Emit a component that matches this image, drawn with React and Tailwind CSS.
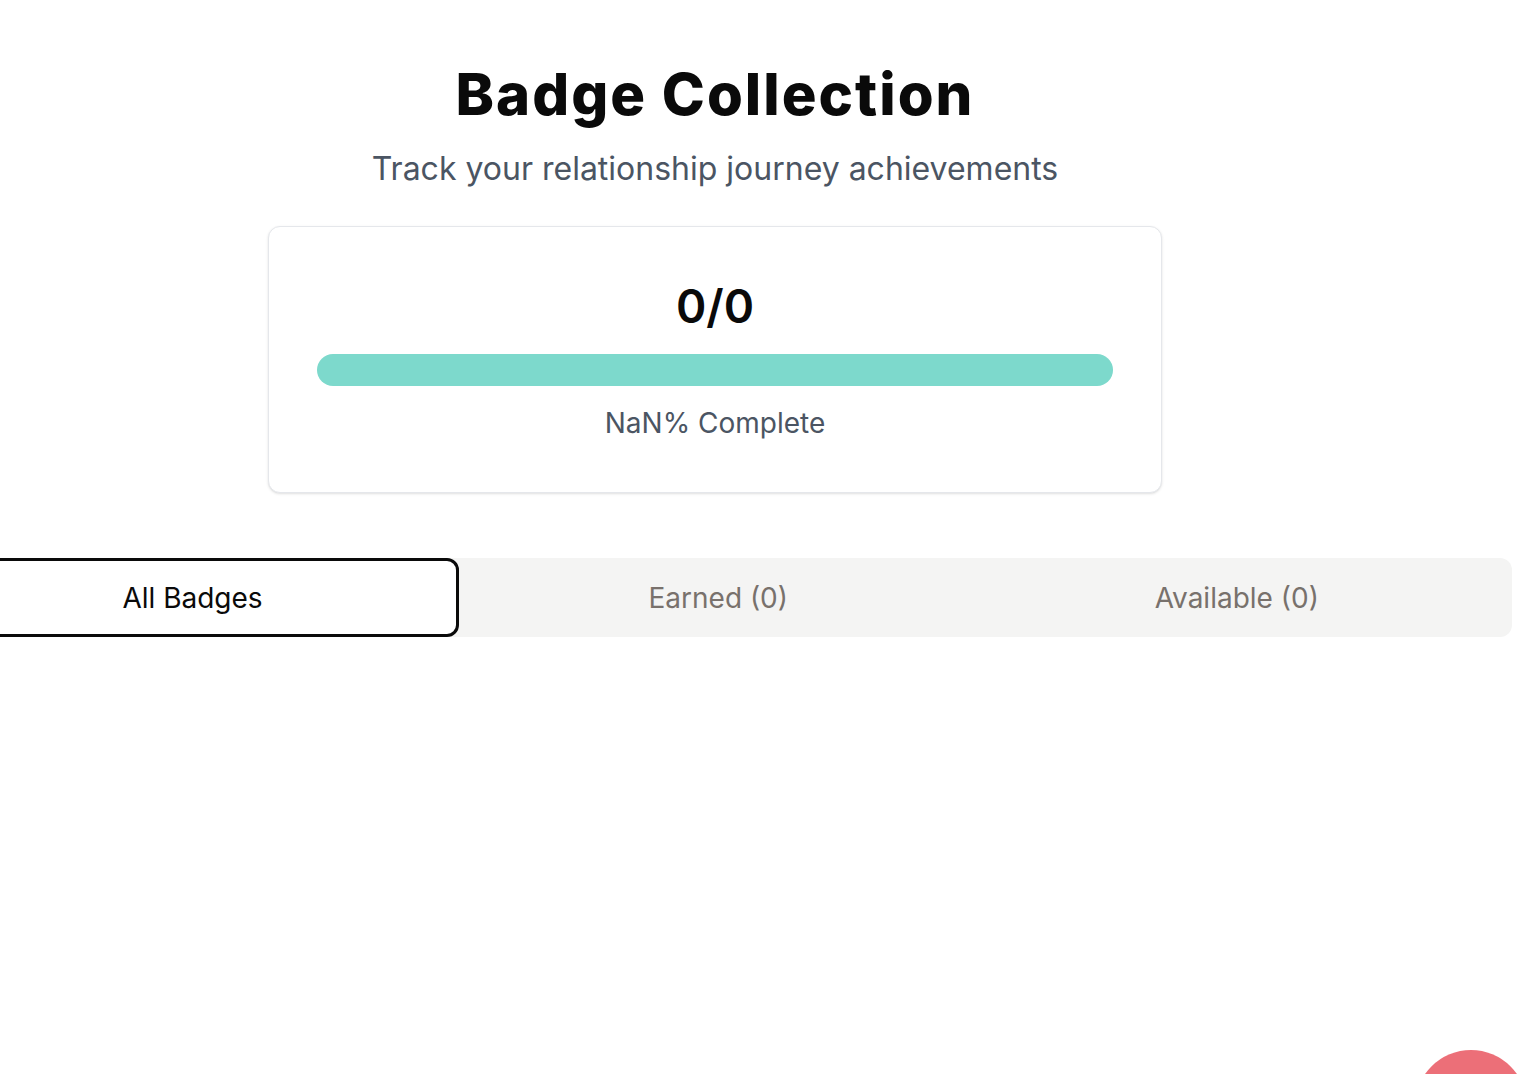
import React, { useState } from "react";

const tabs = [
  { id: "all", label: "All Badges" },
  { id: "earned", label: "Earned (0)" },
  { id: "available", label: "Available (0)" },
];

export default function App() {
  const [active, setActive] = useState("all");
  const earned = 0;
  const total = 0;
  const pct = Math.round((earned / total) * 100);

  return (
    <div className="relative min-h-[1074px] overflow-hidden bg-white font-['Inter',sans-serif]">
      <div className="flex w-[1430px] flex-col items-center pt-[62px]">
        <h1 className="text-[58px] font-extrabold leading-[64px] tracking-[2px] text-[#0a0a0a]">
          Badge Collection
        </h1>
        <p className="mt-[24px] text-[32px] leading-[38px] text-[#4b5563]">
          Track your relationship journey achievements
        </p>

        <div className="mt-[38px] flex w-[894px] flex-col items-center rounded-xl border border-[#e5e7eb] bg-white px-12 pt-[49px] pb-[52px] shadow-sm">
          <div className="text-[46px] font-semibold leading-[60px] text-[#0a0a0a]">
            {earned}/{total}
          </div>
          <div className="mt-[18px] h-8 w-full overflow-hidden rounded-full bg-[#7dd9cc]" />
          <div className="mt-[20px] text-[28px] leading-[34px] text-[#4b5563]">
            {pct}% Complete
          </div>
        </div>

        <div className="mt-[65px] grid h-[79px] w-[1586px] translate-x-[4px] grid-cols-[533px_1fr_1fr] rounded-xl bg-[#f4f4f3] pr-[16px]">
          {tabs.map((t) => (
            <button
              key={t.id}
              type="button"
              onClick={() => setActive(t.id)}
              className={
                active === t.id
                  ? "rounded-xl border-[3px] border-[#0a0a0a] bg-white text-[28px] text-[#0a0a0a]"
                  : "rounded-xl text-[28px] text-[#78716c]"
              }
            >
              {t.label}
            </button>
          ))}
        </div>
      </div>

      <button
        type="button"
        aria-label="Open"
        className="absolute top-[1050px] left-[1415px] h-[112px] w-[112px] rounded-full bg-[#ec6f78]"
      />
    </div>
  );
}
